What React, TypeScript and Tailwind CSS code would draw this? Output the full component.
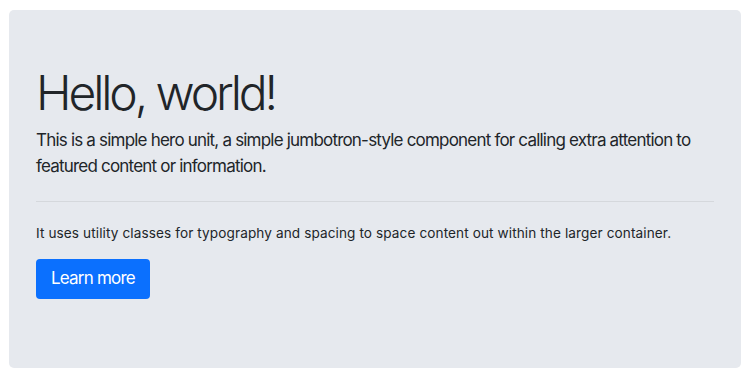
export default function App() {
  return (
    <div className="w-[750px] h-[375px] bg-white pt-[10px] px-[9px]" style={{ fontFamily: 'Inter, "Noto Sans", sans-serif' }}>
      <div className="h-[358px] bg-[#e6e9ee] rounded-[5px] pt-[54px] px-[27px] text-[#212529]">
        <h1 className="text-[48px] leading-[1.2] font-light tracking-[-3.1px] mb-[6.8px]">Hello, world!</h1>
        <p className="text-[17px] leading-[25.5px] tracking-[-0.8px]">
          This is a simple hero unit, a simple jumbotron-style component for calling extra attention to featured content or information.
        </p>
        <hr className="mt-[22px] mb-[21px] border-0 border-t border-[#d5d8dc]" />
        <p className="text-[13.6px] leading-[20.4px] tracking-[0.1px] mb-[15px]">
          It uses utility classes for typography and spacing to space content out within the larger container.
        </p>
        <button className="bg-[#0b70fe] text-white text-[17px] leading-[25.5px] tracking-[-0.8px] px-[15px] py-[7.5px] rounded-[4px]">Learn more</button>
      </div>
    </div>
  );
}
